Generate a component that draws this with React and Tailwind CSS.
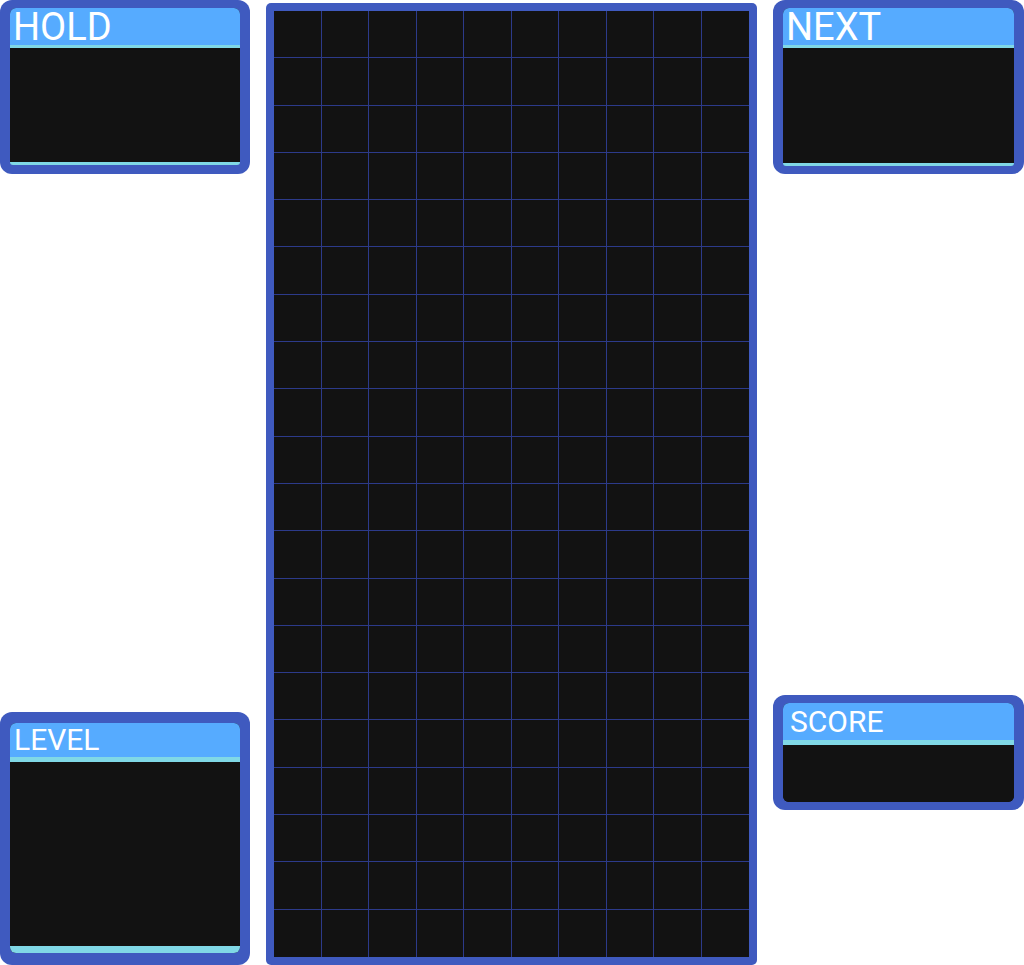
const ROWS = 20;
const COLS = 10;

const HEAD = {
  HOLD: 'h-[37px] pl-[3px] text-[38px]',
  NEXT: 'h-[37px] pl-[3px] text-[38px]',
  LEVEL: 'h-[34px] pl-[4px] text-[30px]',
  SCORE: 'h-[37px] pl-[7px] pt-[1px] text-[30px]',
};

function Panel({ title, line, bodyH, strip, className = '' }) {
  return (
    <div className={`rounded-[12px] bg-[#3f5abf] px-[10px] ${className}`}>
      <div className="rounded-[6px] bg-[#121212]">
        <div className={`flex items-center rounded-t-[6px] bg-[#56abff] text-white ${HEAD[title]}`}>
          <span className="leading-none">{title}</span>
        </div>
        <div style={{ height: line }} className="bg-[#80d8e6]" />
        <div
          style={{ height: bodyH }}
          className={strip > 0 ? 'bg-[#121212]' : 'rounded-b-[6px] bg-[#121212]'}
        />
        {strip > 0 && <div style={{ height: strip }} className="rounded-b-[6px] bg-[#80d8e6]" />}
      </div>
    </div>
  );
}

function Board() {
  const cells = [];
  for (let r = 0; r < ROWS; r++) {
    for (let c = 0; c < COLS; c++) {
      cells.push(
        <div
          key={`${r}-${c}`}
          className={`border-[#2c3a8a] ${c < COLS - 1 ? 'border-r' : ''} ${r < ROWS - 1 ? 'border-b' : ''}`}
        />
      );
    }
  }
  return (
    <div className="mt-[3px] w-[491px] rounded-[5px] bg-[#3f5abf] p-2">
      <div className="grid h-[946px] grid-cols-10 grid-rows-20 bg-[#121212]">{cells}</div>
    </div>
  );
}

export default function App() {
  return (
    <div
      className="flex h-[965px] w-[1024px] gap-4 overflow-hidden bg-white"
      style={{ fontFamily: 'Roboto, "Noto Sans", sans-serif' }}
    >
      <div className="flex w-[250px] flex-col justify-between">
        <Panel title="HOLD" line={3} bodyH={114} strip={3} className="pt-2 pb-[9px]" />
        <Panel title="LEVEL" line={5} bodyH={184} strip={7} className="pt-[11px] pb-3" />
      </div>
      <Board />
      <div className="flex flex-1 flex-col pb-[155px]">
        <Panel title="NEXT" line={3} bodyH={115} strip={3} className="pt-2 pb-2" />
        <Panel title="SCORE" line={5} bodyH={57} strip={0} className="mt-auto pt-2 pb-2" />
      </div>
    </div>
  );
}
